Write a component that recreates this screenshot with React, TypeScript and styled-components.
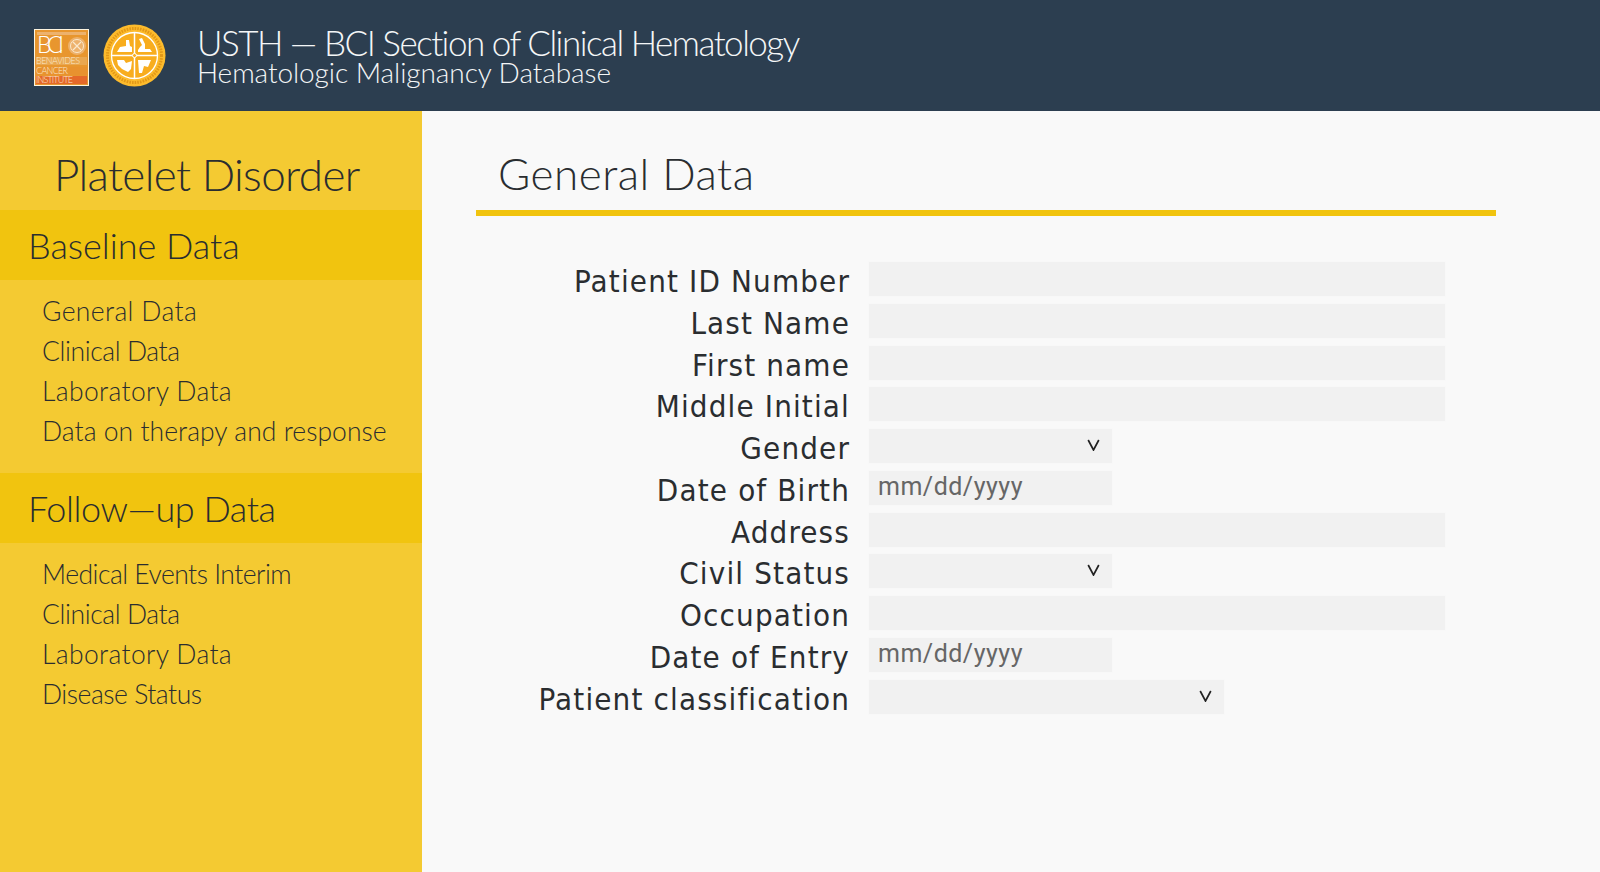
import React from 'react';
import styled, { createGlobalStyle } from 'styled-components';

const Global = createGlobalStyle`
  html, body { margin: 0; padding: 0; background: #f9f9f9; }
  #root { height: 872px; overflow: hidden; }
`;
const Page = styled.div`
  width: 1600px; height: 872px; display: flex; flex-direction: column;
  background: #f9f9f9; overflow: hidden;
`;
const Header = styled.header`
  height: 111px; flex: none; background: #2c3e50; display: flex; align-items: center;
  padding-left: 34px; box-sizing: border-box;
`;
const Logos = styled.div`display: flex; align-items: center; gap: 14px; margin-right: 31px;`;
const BciFrame = styled.div`padding-top: 4px; display: flex;`;
const HeaderText = styled.div`display: flex; flex-direction: column; color: #f4f6f7; font-family: "Lato", sans-serif; font-weight: 300; margin-top: -3px;`;
const HeaderTitle = styled.div`font-size: 35px; line-height: 35px; letter-spacing: -1.5px; white-space: nowrap;`;
const HeaderSub = styled.div`font-size: 28px; line-height: 24px; letter-spacing: -0.07px; white-space: nowrap;`;
const Body = styled.div`flex: 1; display: flex; min-height: 0;`;
const Sidebar = styled.aside`
  width: 422px; flex: none; background: #f4ca32; color: #2a2d30;
  font-family: "Lato", sans-serif; font-weight: 300; display: flex; flex-direction: column;
`;
const SideTitle = styled.h1`
  margin: 0; height: 99px; box-sizing: border-box; padding: 39px 0 0 54px; font-weight: 300;
  font-size: 44px; line-height: 48px; letter-spacing: -0.65px; white-space: nowrap;
`;
const Section = styled.h2<{ $track: number }>`
  margin: 0; height: 70px; background: #f1c40f; display: flex; align-items: center;
  padding-left: 28px; font-weight: 300; font-size: 36px; letter-spacing: ${p => p.$track}px;
`;
const NavList = styled.ul`
  list-style: none; margin: 0; padding: 11px 0 22px 42px; display: flex; flex-direction: column;
`;
const NavItem = styled.li<{ $track: number }>`
  height: 40px; font-size: 26.5px; line-height: 40px; letter-spacing: ${p => p.$track}px; white-space: nowrap;
`;
const Main = styled.main`flex: 1; padding-left: 54px; min-width: 0;`;
const MainHead = styled.div`
  width: 1020px; height: 105px; box-sizing: border-box; border-bottom: 6px solid #f1c40f;
  padding: 37px 0 0 22px;
`;
const MainTitle = styled.h1`
  margin: 0; font-family: "Lato", sans-serif; font-weight: 300; font-size: 44px; line-height: 50px;
  letter-spacing: 0.5px; color: #2a2d30;
`;
const Form = styled.form`
  display: grid; grid-template-columns: 374px 1fr; column-gap: 19px; row-gap: 7.75px;
  width: 968px; padding-top: 46px;
`;
const Label = styled.label`
  font-family: "DejaVu Sans", sans-serif; font-stretch: condensed; font-size: 31px; line-height: 39px; text-align: right;
  letter-spacing: 1.15px; color: #2a2d30; white-space: nowrap; height: 34px;
`;
const Field = styled.div<{ $w: number }>`
  width: ${p => p.$w}px; height: 34px; background: #f1f1f1; box-sizing: border-box;
  box-shadow: 0 0 2px #f4f4f4;
  display: flex; align-items: center; padding: 0 9px 2px;
  font-family: "Roboto", sans-serif; font-size: 25px; letter-spacing: 0.5px; color: #666;
`;
const Chevron = styled.svg`width: 13px; height: 12px; margin-left: auto; margin-right: 3px; flex: none;`;
const Caret = () => (
  <Chevron viewBox="0 0 13 12"><path d="M1.2 1l5.3 10L11.8 1" fill="none" stroke="#222" strokeWidth="1.7" /></Chevron>
);

const BciLogo = () => (
  <svg width="55" height="57" viewBox="0 0 55 57">
    <rect x="0.5" y="0.5" width="54" height="56" fill="#e8962e" stroke="#fdf4e0" />
    <rect x="3" y="3" width="49" height="3" fill="#edb26d" />
    <rect x="2" y="28" width="51" height="8" fill="#e9a750" />
    <rect x="2" y="38" width="51" height="8" fill="#e8922f" />
    <rect x="2" y="47" width="51" height="8" fill="#e5692a" />
    <text x="3" y="24" fontFamily="Lato" fontWeight="300" fontSize="23" fill="#fff" textLength="27">BCI</text>
    <circle cx="43" cy="17" r="9" fill="#edb26d" />
    <circle cx="43" cy="17" r="6.5" fill="none" stroke="#fbe8cb" strokeWidth="1" />
    <path d="M39 13l8 8M47 13l-8 8" stroke="#fbe8cb" strokeWidth="1.2" />
    <text x="2" y="35" fontFamily="Lato" fontWeight="300" fontSize="9" fill="#fae8cc" textLength="44">BENAVIDES</text>
    <text x="2" y="45" fontFamily="Lato" fontWeight="300" fontSize="9" fill="#fae8cc" textLength="32">CANCER</text>
    <text x="2" y="54" fontFamily="Lato" fontWeight="300" fontSize="9" fill="#fae8cc" textLength="37">INSTITUTE</text>
  </svg>
);
const SealLogo = () => (
  <svg width="63" height="63" viewBox="0 0 63 63">
    <circle cx="31.5" cy="31.5" r="31" fill="#fdbb2c" />
    <circle cx="31.5" cy="31.5" r="27" fill="none" stroke="#d98c10" strokeWidth="3" strokeDasharray="1.6 1.1" opacity="0.75" />
    <circle cx="31.5" cy="31.5" r="23" fill="#f8ad1e" stroke="#fff" strokeWidth="1.3" />
    <path d="M31.5 9v45M9 31.5h45" stroke="#fff" strokeWidth="1.5" />
    <circle cx="31.5" cy="31.5" r="2" fill="#f8ad1e" stroke="#fff" />
    <path d="M14 28l3-5 6-1v-6h3l1 6 2 1v5z" fill="#fff" />
    <path d="M35 28h14l-2-3-5 0 0-5-3-6-3 1 3 6-2 2-2 3z" fill="#fff" />
    <path d="M14 36l7 0 2 3 6-2-1 8-3 3-6-3-4-4z" fill="#fff" />
    <path d="M35 36h13l-3 7-4-1-2 7-3 0z" fill="#fff" />
  </svg>
);

type F = { label: string; w: number; kind?: 'select' | 'date' };
const fields: F[] = [
  { label: 'Patient ID Number', w: 576 },
  { label: 'Last Name', w: 576 },
  { label: 'First name', w: 576 },
  { label: 'Middle Initial', w: 576 },
  { label: 'Gender', w: 243, kind: 'select' },
  { label: 'Date of Birth', w: 243, kind: 'date' },
  { label: 'Address', w: 576 },
  { label: 'Civil Status', w: 243, kind: 'select' },
  { label: 'Occupation', w: 576 },
  { label: 'Date of Entry', w: 243, kind: 'date' },
  { label: 'Patient classification', w: 355, kind: 'select' },
];
const baseline = [
  { text: 'General Data', track: 0.36 },
  { text: 'Clinical Data', track: -0.4 },
  { text: 'Laboratory Data', track: 0.35 },
  { text: 'Data on therapy and response', track: 0.04 },
];
const followup = [
  { text: 'Medical Events Interim', track: -0.5 },
  { text: 'Clinical Data', track: -0.4 },
  { text: 'Laboratory Data', track: 0.35 },
  { text: 'Disease Status', track: -0.47 },
];

export default function App() {
  return (
    <Page>
      <Global />
      <Header>
        <Logos><BciFrame><BciLogo /></BciFrame><SealLogo /></Logos>
        <HeaderText>
          <HeaderTitle>USTH — BCI Section of Clinical Hematology</HeaderTitle>
          <HeaderSub>Hematologic Malignancy Database</HeaderSub>
        </HeaderText>
      </Header>
      <Body>
        <Sidebar>
          <SideTitle>Platelet Disorder</SideTitle>
          <Section $track={-0.03}>Baseline Data</Section>
          <NavList>{baseline.map(t => <NavItem key={t.text} $track={t.track}>{t.text}</NavItem>)}</NavList>
          <Section $track={-0.45}>Follow—up Data</Section>
          <NavList>{followup.map(t => <NavItem key={t.text} $track={t.track}>{t.text}</NavItem>)}</NavList>
        </Sidebar>
        <Main>
          <MainHead><MainTitle>General Data</MainTitle></MainHead>
          <Form>
            {fields.map(f => (
              <React.Fragment key={f.label}>
                <Label>{f.label}</Label>
                <Field $w={f.w}>
                  {f.kind === 'date' && 'mm/dd/yyyy'}
                  {f.kind === 'select' && <Caret />}
                </Field>
              </React.Fragment>
            ))}
          </Form>
        </Main>
      </Body>
    </Page>
  );
}
